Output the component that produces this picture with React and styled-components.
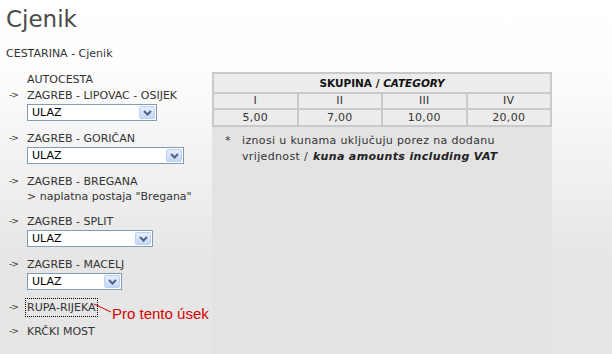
import styled, { createGlobalStyle } from 'styled-components';

const routes = [
    { pre: "AUTOCESTA", name: "ZAGREB - LIPOVAC - OSIJEK", select: 130 },
    { name: "ZAGREB - GORIČAN", select: 157 },
    { name: "ZAGREB - BREGANA", sub: '> naplatna postaja "Bregana"' },
    { name: "ZAGREB - SPLIT", select: 126 },
    { name: "ZAGREB - MACELJ", select: 95 },
    { name: "RUPA-RIJEKA", focused: true, note: "Pro tento úsek" },
    { name: "KRČKI MOST" },
];

const categories = [
    { label: "I", price: "5,00", w: 72 },
    { label: "II", price: "7,00", w: 73 },
    { label: "III", price: "10,00", w: 93 },
    { label: "IV", price: "20,00", w: 92 },
];

export default function App() {
    return (
        <Page>
            <GlobalStyle />
            <Header>
                <Title>Cjenik</Title>
                <Crumb>CESTARINA - Cjenik</Crumb>
            </Header>
            <Main>
                <Routes>
                    {routes.map((it, idx) => (
                        <Route key={idx}>
                            {it.pre && <Pre>{it.pre}</Pre>}
                            <Arrow>-&gt;</Arrow>
                            <RouteName $focused={it.focused}>{it.name}</RouteName>
                            {it.select && (
                                <Select $w={it.select}>
                                    <SelectValue>ULAZ</SelectValue>
                                    <SelectButton>
                                        <svg width="9" height="6" viewBox="0 0 9 6">
                                            <path d="M1 1 L4.5 4.5 L8 1" fill="none" stroke="#4d6185" strokeWidth="2" />
                                        </svg>
                                    </SelectButton>
                                </Select>
                            )}
                            {it.sub && <Sub>{it.sub}</Sub>}
                            {it.note && (
                                <>
                                    <NoteLine width="18" height="11" viewBox="0 0 18 11">
                                        <line x1="0" y1="1" x2="17" y2="9" stroke="#d40000" strokeWidth="1" />
                                    </NoteLine>
                                    <RedNote>{it.note}</RedNote>
                                </>
                            )}
                        </Route>
                    ))}
                </Routes>
                <Panel>
                    <Table>
                        <tbody>
                            <tr>
                                <HeadCell colSpan={4}>SKUPINA / <i>CATEGORY</i></HeadCell>
                            </tr>
                            <tr>
                                {categories.map((c) => (
                                    <Cell key={c.label} $w={c.w}>{c.label}</Cell>
                                ))}
                            </tr>
                            <tr>
                                {categories.map((c) => (
                                    <Cell key={c.label} $w={c.w} $tall>{c.price}</Cell>
                                ))}
                            </tr>
                        </tbody>
                    </Table>
                    <Note>
                        <span>*</span>
                        <span>iznosi u kunama uključuju porez na dodanu vrijednost / <b><i>kuna amounts including VAT</i></b></span>
                    </Note>
                </Panel>
            </Main>
        </Page>
    );
}

const GlobalStyle = createGlobalStyle`
    html {
        min-height: 100%;
        background: #e6e6e6 linear-gradient(180deg, #ffffff 0px, #fdfdfd 70px, #e6e6e6 260px) no-repeat;
    }
    body {
        margin: 0;
        font-family: "DejaVu Sans", Verdana, sans-serif;
        color: #333;
    }
`

const Page = styled.div`
    width: 612px;
`

const Header = styled.div`
    padding: 5px 0 0 6px;
`

const Title = styled.h1`
    margin: 0;
    font-size: 23px;
    line-height: 28px;
    font-weight: normal;
    color: #4a4a4a;
`

const Crumb = styled.div`
    margin-top: 13px;
    font-size: 11px;
    line-height: 15px;
`

const Main = styled.div`
    display: flex;
    margin-top: 11px;
`

const Routes = styled.ul`
    list-style: none;
    margin: 0;
    padding: 0 0 0 8px;
    width: 204px;
    font-size: 11px;
    line-height: 15px;
`

const Route = styled.li`
    position: relative;
    display: grid;
    grid-template-columns: 19px auto;
    align-items: center;
    justify-items: start;
    margin-bottom: 9px;
`

const Pre = styled.div`
    grid-column: 2;
    line-height: 16px;
`

const Arrow = styled.span`
    grid-column: 1;
    font-size: 9px;
    letter-spacing: -1px;
    padding-left: 1px;
`

const RouteName = styled.span`
    grid-column: 2;
    outline: ${p => p.$focused ? '1px dotted #000' : 'none'};
    outline-offset: 1px;
`

const Sub = styled.div`
    grid-column: 2;
    padding-bottom: 1px;
`

const Select = styled.div`
    grid-column: 2;
    box-sizing: border-box;
    display: flex;
    align-items: center;
    justify-content: space-between;
    width: ${p => p.$w}px;
    height: 17px;
    margin: 1px 0;
    padding: 0 1px 0 4px;
    border: 1px solid #7f9db9;
    background: #fff;
    color: #000;
`

const SelectValue = styled.span`
    line-height: 15px;
`

const SelectButton = styled.span`
    box-sizing: border-box;
    display: flex;
    align-items: center;
    justify-content: center;
    width: 16px;
    height: 13px;
    border: 1px solid #bcd0f4;
    border-radius: 2px;
    background: linear-gradient(180deg, #e6eefc 0%, #c6d7f7 100%);
`

const NoteLine = styled.svg`
    position: absolute;
    left: 86px;
    top: 3px;
`

const RedNote = styled.span`
    position: absolute;
    left: 104px;
    top: 6px;
    font-family: "Liberation Sans", Arial, sans-serif;
    font-size: 15px;
    line-height: 16px;
    color: #d40000;
    white-space: nowrap;
`

const Panel = styled.section`
    width: 340px;
    min-height: calc(100vh - 72px);
    background: #e3e3e3;
`

const Table = styled.table`
    width: 100%;
    table-layout: fixed;
    border-collapse: separate;
    border-spacing: 2px;
    background: #c9c9c9;
    font-size: 11px;
    line-height: 14px;
    letter-spacing: 0.3px;
    color: #333;
`

const HeadCell = styled.th`
    height: 18px;
    padding: 0;
    background: #ececec;
    font-size: 10.5px;
    letter-spacing: 0;
    color: #111;
`

const Cell = styled.td`
    width: ${p => p.$w}px;
    height: ${p => p.$tall ? 15 : 14}px;
    padding: 0;
    text-align: center;
    background: #ececec;
`

const Note = styled.div`
    display: grid;
    grid-template-columns: 17px 280px;
    padding: 6px 0 0 13px;
    font-size: 11px;
    line-height: 16px;
    letter-spacing: 0.35px;
    color: #333;

    b {
        margin-left: 1px;
        color: #222;
    }
`
